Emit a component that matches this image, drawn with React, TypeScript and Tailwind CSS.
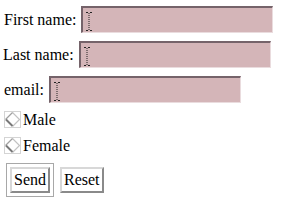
import React from 'react';

const Caret = () => (
  <svg width="6" height="19" viewBox="0 0 6 19" className="absolute left-[3px] top-[4px]">
    <path d="M0 0.5h2M4 0.5h2M0 18.5h2M4 18.5h2" stroke="#222" strokeWidth="1" />
    <path d="M3 1v17" stroke="#222" strokeWidth="1" strokeDasharray="1 1" />
  </svg>
);

const Field = ({ label }: { label: string }) => (
  <div className="flex items-center h-[27px]">
    <span className="mr-[5px]">{label}</span>
    <div className="relative w-[192px] h-[27px] bg-[#d4b5b8] border-t-2 border-l-2 border-t-[#75636a] border-l-[#75636a] border-b border-r border-b-[#eadcde] border-r-[#eadcde]">
      <Caret />
    </div>
  </div>
);

const Radio = ({ label }: { label: string }) => (
  <div className="flex items-center h-[17px]">
    <svg width="17" height="17" viewBox="0 0 17 17" className="mr-[2px]">
      <rect x="0.5" y="0.5" width="16" height="16" fill="#fff" stroke="#d4d4d4" />
      <path d="M8.5 1.5L15.5 8.5L8.5 15.5" fill="none" stroke="#c2c2c2" strokeWidth="1.2" />
      <path d="M8.5 1.5L1.5 8.5" fill="none" stroke="#a0a0a0" strokeWidth="1.2" />
      <path d="M2 8.5L8.5 15" fill="none" stroke="#787878" strokeWidth="2" />
    </svg>
    <span>{label}</span>
  </div>
);

export default function App() {
  return (
    <div className="w-[290px] h-[203px] bg-white pl-[4px] pt-[6px] text-[16px] leading-none text-black font-['Liberation_Serif',serif]">
      <div className="flex flex-col gap-[8px]">
        <Field label="First name:" />
        <div className="-ml-[1px]"><Field label="Last name:" /></div>
        <Field label="email:" />
      </div>
      <div className="flex flex-col gap-[9px] mt-[8px]">
        <Radio label="Male" />
        <Radio label="Female" />
      </div>
      <div className="flex items-center mt-[9px]">
        <div className="ml-[2px] border border-[#a8a8a8] p-[3px]">
          <button className="h-[26px] px-[2px] bg-white border-2 border-t-[#d8d8d8] border-l-[#d8d8d8] border-b-[#8a8a8a] border-r-[#8a8a8a]">
            Send
          </button>
        </div>
        <button className="ml-[6px] h-[26px] px-[2px] bg-white border-2 border-t-[#d8d8d8] border-l-[#d8d8d8] border-b-[#8a8a8a] border-r-[#8a8a8a]">
          Reset
        </button>
      </div>
    </div>
  );
}
